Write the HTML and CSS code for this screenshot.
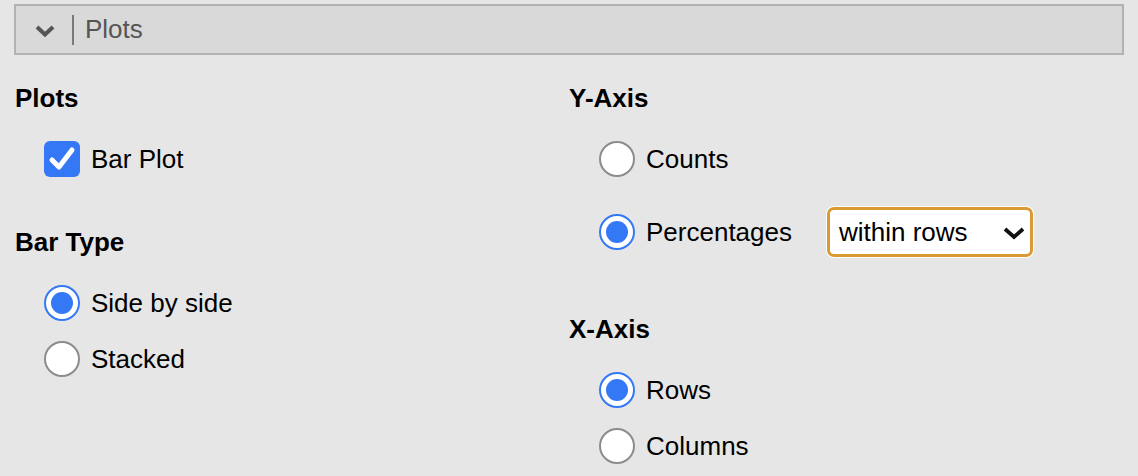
FILE: index.html
```html
<!DOCTYPE html>
<html lang="en">

<head>
    <meta charset="UTF-8">
    <title>Plots</title>
    <link rel="stylesheet" href="styles.css">
</head>

<body>
    <!-- 折叠标题 -->
    <div class="panel-head">
        <svg class="chev" width="22" height="14" viewBox="0 0 22 14">
            <path d="M3 3 L11 10.5 L19 3" fill="none" stroke="#555" stroke-width="4"/>
        </svg>
        <span class="sep"></span>
        <span class="title">Plots</span>
    </div>

    <div class="panel-body">
        <div class="col left">
            <div class="section">
                <h3>Plots</h3>
                <div class="opts">
                    <label class="opt">
                        <span class="check">
                            <svg width="36" height="36" viewBox="0 0 36 36">
                                <path d="M8 19 L15 26 L28 9" fill="none" stroke="#fff" stroke-width="5" stroke-linecap="round" stroke-linejoin="round"/>
                            </svg>
                        </span>
                        Bar Plot
                    </label>
                </div>
            </div>
            <div class="section">
                <h3>Bar Type</h3>
                <div class="opts">
                    <label class="opt"><span class="radio on"></span>Side by side</label>
                    <label class="opt"><span class="radio"></span>Stacked</label>
                </div>
            </div>
        </div>

        <div class="col">
            <div class="section">
                <h3>Y-Axis</h3>
                <div class="opts">
                    <label class="opt"><span class="radio"></span>Counts</label>
                    <label class="opt with-select"><span class="radio on"></span>Percentages
                        <span class="select">
                            within rows
                            <svg width="22" height="14" viewBox="0 0 22 14">
                                <path d="M2 3 L11 11 L20 3" fill="none" stroke="#111" stroke-width="3.8"/>
                            </svg>
                        </span>
                    </label>
                </div>
            </div>
            <div class="section">
                <h3>X-Axis</h3>
                <div class="opts">
                    <label class="opt"><span class="radio on"></span>Rows</label>
                    <label class="opt"><span class="radio"></span>Columns</label>
                </div>
            </div>
        </div>
    </div>
</body>

</html>
```

FILE: styles.css
```css
html,
body,
div,
h3 {
    padding: 0;
    margin: 0;
}

body {
    background-color: #e6e6e6;
    font-family: "Liberation Sans", Arial, sans-serif;
    font-size: 26px;
    color: #111;
    padding: 4px 14px;
}

/* 标题栏 */

.panel-head {
    height: 47px;
    border: 2px solid #b2b2b2;
    background-color: #d9d9d9;
    display: flex;
    align-items: center;
}

.panel-head .chev {
    margin-left: 18px;
    margin-top: 2px;
}

.panel-head .sep {
    width: 2px;
    height: 30px;
    background-color: #7a7a7a;
    margin-left: 16px;
    margin-right: 11px;
}

.panel-head .title {
    color: #555;
    font-size: 26px;
}

/* 内容 */

.panel-body {
    display: grid;
    grid-template-columns: 555px 1fr;
}

.section {
    margin-top: 28px;
}

.col .section + .section {
    margin-top: 50px;
}

.section h3 {
    font-size: 26px;
    font-weight: bold;
    line-height: 30px;
    height: 30px;
    color: #000;
}

.left .section h3 {
    padding-left: 1px;
}

.opts {
    margin-top: 28px;
    padding-left: 30px;
    display: flex;
    flex-direction: column;
    gap: 20px;
}

.opt {
    display: flex;
    align-items: center;
    height: 36px;
    line-height: 36px;
    color: #000;
}

.opt.with-select {
    height: 50px;
    padding-top: 10px;
    padding-bottom: 7px;
}

.check {
    width: 36px;
    height: 36px;
    border-radius: 6px;
    background-color: #3478f6;
    margin-right: 11px;
    display: block;
}

.check svg {
    display: block;
}

.radio {
    width: 32px;
    height: 32px;
    border: 2px solid #8c8c8c;
    border-radius: 50%;
    background-color: #fff;
    margin-right: 11px;
    box-sizing: content-box;
    position: relative;
}

.radio.on {
    border-color: #3478f6;
}

.radio.on::after {
    content: "";
    position: absolute;
    left: 5px;
    top: 5px;
    width: 22px;
    height: 22px;
    border-radius: 50%;
    background-color: #3478f6;
}

.select {
    margin-left: 35px;
    width: 186px;
    height: 44px;
    border: 3px solid #d99a35;
    border-radius: 7px;
    background-color: #fff;
    box-shadow: 0 0 0 1px #fff;
    display: flex;
    align-items: center;
    justify-content: space-between;
    padding: 0 5px 0 9px;
    box-sizing: content-box;
    line-height: 44px;
}

.select svg {
    display: block;
    margin-top: 2px;
}
```
